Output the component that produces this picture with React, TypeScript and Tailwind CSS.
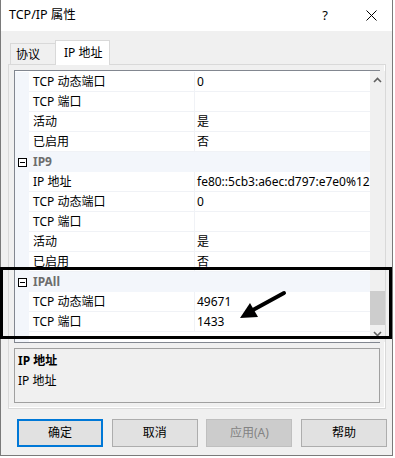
import React from 'react'

type Row =
  | { kind: 'prop'; label: string; value: string }
  | { kind: 'cat'; label: string }

const ROWS: Row[] = [
  { kind: 'prop', label: 'TCP 动态端口', value: '0' },
  { kind: 'prop', label: 'TCP 端口', value: '' },
  { kind: 'prop', label: '活动', value: '是' },
  { kind: 'prop', label: '已启用', value: '否' },
  { kind: 'cat', label: 'IP9' },
  { kind: 'prop', label: 'IP 地址', value: 'fe80::5cb3:a6ec:d797:e7e0%12' },
  { kind: 'prop', label: 'TCP 动态端口', value: '0' },
  { kind: 'prop', label: 'TCP 端口', value: '' },
  { kind: 'prop', label: '活动', value: '是' },
  { kind: 'prop', label: '已启用', value: '否' },
  { kind: 'cat', label: 'IPAll' },
  { kind: 'prop', label: 'TCP 动态端口', value: '49671' },
  { kind: 'prop', label: 'TCP 端口', value: '1433' },
]

const MinusBox = () => (
  <span className="w-[9px] h-[9px] border border-black flex items-center justify-center bg-white">
    <span className="w-[5px] h-px bg-black" />
  </span>
)

const Chevron = ({ up }: { up?: boolean }) => (
  <svg width="9" height="6" viewBox="0 0 9 6">
    <path
      d={up ? 'M1 5 L4.5 1.5 L8 5' : 'M1 1 L4.5 4.5 L8 1'}
      fill="none"
      stroke="#606060"
      strokeWidth="1.6"
    />
  </svg>
)

function GridRow({ row }: { row: Row }) {
  if (row.kind === 'cat') {
    return (
      <div className="flex h-[20px]">
        <div className="w-[14px] bg-[#f3f6fb] flex items-center justify-center">
          <MinusBox />
        </div>
        <div className="flex-1 bg-[#f3f6fb] flex items-center pl-[4px] font-bold text-[#6d6d6d]">
          {row.label}
        </div>
      </div>
    )
  }
  return (
    <div className="flex h-[20px]">
      <div className="w-[14px] bg-[#f3f6fb]" />
      <div className="flex-1 flex bg-white border-b border-[#f0f2f6]">
        <div className="w-[166px] border-r border-[#f0f2f6] flex items-center pl-[4px]">
          {row.label}
        </div>
        <div className="flex-1 flex items-center pl-[2px]">{row.value}</div>
      </div>
    </div>
  )
}

export default function App() {
  return (
    <div className="relative w-[395px] h-[458px] bg-white text-[12px] text-black font-['Noto_Sans','Noto_Sans_CJK_SC',sans-serif]">
      <div className="w-[393px] h-[456px] bg-[#f0f0f0] border-l border-r border-b border-[#7a7a7a] flex flex-col">
        {/* Title bar */}
        <div className="h-[31px] bg-white flex items-center pl-[8px]">
          <span className="text-[12.5px]">TCP/IP 属性</span>
          <span className="ml-auto mr-[38px] text-[13px]">?</span>
          <svg width="11" height="11" viewBox="0 0 11 11" className="mr-[15px]">
            <path d="M0.5 0.5 L10.5 10.5 M10.5 0.5 L0.5 10.5" stroke="#000" strokeWidth="1" />
          </svg>
        </div>

        <div className="flex flex-col pl-[7px] pr-[6px] pt-[9px]">
          {/* Tabs */}
          <div className="flex items-end pl-[2px] relative z-10 -mb-px">
            <div className="w-[46px] h-[22px] border border-b-0 border-[#d9d9d9] flex items-center pl-[5px]">
              协议
            </div>
            <div className="w-[55px] h-[25px] bg-white border border-b-0 border-[#d9d9d9] -ml-px flex items-center pl-[8px]">
              IP 地址
            </div>
          </div>

          {/* Tab page */}
          <div className="h-[345px] border border-[#d9d9d9] shadow-[inset_-1px_-1px_0_#ffffff] bg-[#f0f0f0] px-[5px] pt-[5px] flex flex-col">
            {/* Property grid */}
            <div className="h-[273px] border border-[#828790] flex">
              <div className="flex-1 bg-white pt-px flex flex-col">
                {ROWS.map((r, i) => (
                  <GridRow key={i} row={r} />
                ))}
                <div className="flex flex-1">
                  <div className="w-[14px] bg-[#f3f6fb]" />
                  <div className="flex-1 bg-white" />
                </div>
              </div>
              <div className="w-[16px] bg-[#f0f0f0] flex flex-col items-center">
                <div className="h-[18px] flex items-center justify-center">
                  <Chevron up />
                </div>
                <div className="flex-1" />
                <div className="w-[15px] h-[34px] bg-[#cdcdcd]" />
                <div className="h-[17px] flex items-center justify-center">
                  <Chevron />
                </div>
              </div>
            </div>

            {/* Description */}
            <div className="mt-[5px] h-[55px] border border-[#a0a0a0] bg-[#f0f0f0] px-[3px] pt-[2px] flex flex-col">
              <div className="font-bold h-[20px] flex items-center">IP 地址</div>
              <div className="h-[20px] flex items-center">IP 地址</div>
            </div>
          </div>

          {/* Buttons */}
          <div className="flex justify-between pl-[9px] pr-[-1px] mt-[10px] w-[379px]">
            <button className="w-[86px] h-[28px] bg-[#e1e1e1] border-2 border-[#0078d7]">确定</button>
            <button className="w-[86px] h-[28px] bg-[#e1e1e1] border border-[#adadad]">取消</button>
            <button className="w-[86px] h-[28px] bg-[#cccccc] border border-[#bfbfbf] text-[#838383]">
              应用(A)
            </button>
            <button className="w-[86px] h-[28px] bg-[#e1e1e1] border border-[#adadad]">帮助</button>
          </div>
        </div>
      </div>

      {/* Annotation overlay */}
      <div className="absolute left-0 top-[267px] w-[392px] h-[72px] border-[3px] border-black pointer-events-none" />
      <svg className="absolute left-0 top-0 pointer-events-none" width="395" height="458">
        <line x1="252" y1="310.5" x2="284" y2="293" stroke="#000" strokeWidth="4" strokeLinecap="round" />
        <polygon points="240,318 258,317 250,303" fill="#000" />
      </svg>
    </div>
  )
}
